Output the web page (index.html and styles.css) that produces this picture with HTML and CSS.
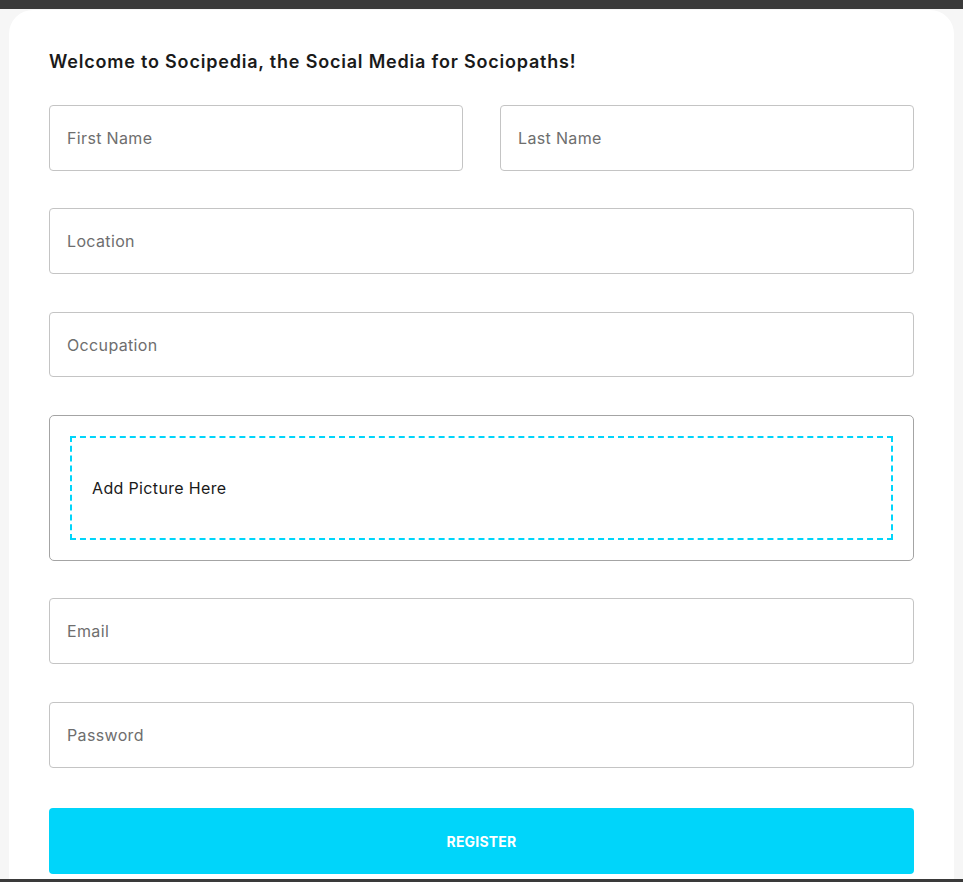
FILE: index.html
```html
<!DOCTYPE html>
<html lang="en">
<head>
<meta charset="utf-8">
<title>Socipedia - Register</title>
<link rel="stylesheet" href="styles.css">
</head>
<body>
<div class="page">
  <div class="topbar"></div>
  <main class="main">
    <section class="card">
      <h1 class="title">Welcome to Socipedia, the Social Media for Sociopaths!</h1>
      <form class="form">
        <input class="field" type="text" placeholder="First Name">
        <input class="field" type="text" placeholder="Last Name">
        <input class="field span2" type="text" placeholder="Location">
        <input class="field span2 occ" type="text" placeholder="Occupation">
        <div class="picture span2">
          <div class="dropzone"><p class="dropzone-text">Add Picture Here</p></div>
        </div>
        <input class="field span2" type="email" placeholder="Email">
        <input class="field span2 pw" type="password" placeholder="Password">
        <button class="register span2" type="button">REGISTER</button>
      </form>
    </section>
  </main>
  <div class="bottombar"></div>
</div>
</body>
</html>
```

FILE: styles.css
```css
* { box-sizing: border-box; }
html, body { margin: 0; padding: 0; }
body {
  background: #f6f6f6;
  font-family: "Inter", "Roboto", "Liberation Sans", sans-serif;
  color: #1c1c1c;
}
.page {
  height: 100vh;
  display: flex;
  flex-direction: column;
  overflow: hidden;
}
.topbar {
  height: 9px;
  flex: none;
  background: #3a3a3a;
}
.main {
  flex: 1;
  min-height: 0;
  overflow: hidden;
  padding: 1px 9px 0;
}
.card {
  background: #ffffff;
  border-radius: 24px 24px 0 0;
  padding: 40px 40px 40px;
  min-height: 100%;
}
.title {
  margin: 0 0 31px;
  font-size: 18px;
  line-height: 24px;
  font-weight: 600;
  letter-spacing: 0.8px;
  color: #1a1a1a;
}
.form {
  display: grid;
  grid-template-columns: 1fr 1fr;
  gap: 37px;
}
.span2 { grid-column: span 2; }
.field {
  height: 66px;
  width: 100%;
  border: 1px solid #c4c4c4;
  border-radius: 4px;
  padding: 0 17px;
  font-family: inherit;
  font-size: 16px;
  letter-spacing: 0.35px;
  color: #1a1a1a;
  background: #fff;
  outline: none;
}
.field::placeholder { color: #6e6e6e; }
.occ { margin-top: 1px; height: 65px; }
.picture {
  border: 1px solid #a4a4a4;
  border-radius: 5px;
  padding: 20px;
  margin-top: 1px;
}
.dropzone {
  border: 2px dashed #00d5fa;
  height: 104px;
  padding: 0 20px;
  display: flex;
  align-items: center;
}
.dropzone-text {
  margin: 0;
  font-size: 16px;
  line-height: 24px;
  letter-spacing: 0.35px;
  color: #1a1a1a;
}
.pw { margin-top: 1px; }
.register {
  height: 66px;
  margin-top: 3px;
  border: none;
  border-radius: 4px;
  background: #00d5fa;
  color: #ffffff;
  font-family: inherit;
  font-size: 14px;
  font-weight: 700;
  letter-spacing: 0.2px;
  cursor: pointer;
}
.bottombar {
  height: 3px;
  flex: none;
  background: #3a3a3a;
}
```
